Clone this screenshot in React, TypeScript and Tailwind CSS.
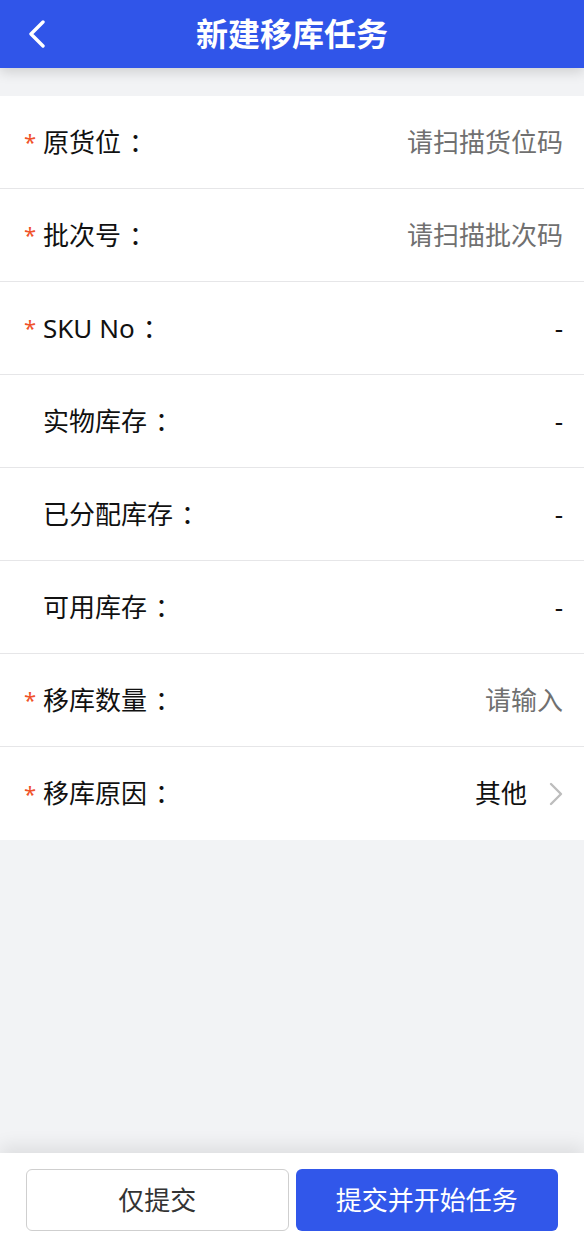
type Row = {
  label: string;
  required: boolean;
  value: string;
  placeholder?: boolean;
  arrow?: boolean;
};

const rows: Row[] = [
  { label: '原货位', required: true, value: '请扫描货位码', placeholder: true },
  { label: '批次号', required: true, value: '请扫描批次码', placeholder: true },
  { label: 'SKU No', required: true, value: '-' },
  { label: '实物库存', required: false, value: '-' },
  { label: '已分配库存', required: false, value: '-' },
  { label: '可用库存', required: false, value: '-' },
  { label: '移库数量', required: true, value: '请输入', placeholder: true },
  { label: '移库原因', required: true, value: '其他', arrow: true },
];

export default function App() {
  return (
    <div
      className="flex h-[1238px] w-[584px] flex-col overflow-hidden bg-[#f2f3f5]"
      style={{ fontFamily: '"Noto Sans", "Noto Sans CJK SC", sans-serif' }}
    >
      <header className="relative z-10 flex h-[68px] shrink-0 items-center justify-center bg-[#3055e9] shadow-[0_4px_12px_rgba(0,0,0,0.15)]">
        <svg className="absolute left-[27px] top-[20px]" width="20" height="28" viewBox="0 0 20 28" fill="none">
          <polyline points="16,2 4,14 16,26" stroke="white" strokeWidth="3.4" strokeLinecap="round" strokeLinejoin="round" />
        </svg>
        <h1 className="text-[32px] font-bold text-white">新建移库任务</h1>
      </header>

      <div className="mt-[28px] bg-white">
        {rows.map((row, i) => (
          <div
            key={row.label}
            className={`flex h-[93px] items-center pr-[21px] ${i < rows.length - 1 ? 'border-b border-[#e6e6e8]' : ''}`}
          >
            <span className="w-[43px] self-center pb-[2px] pl-[24px] text-[22px] leading-none text-[#f0522a]">
              {row.required ? '*' : ''}
            </span>
            <span className="text-[26px] text-[#111]">
              {row.label}
              <span className="ml-[8px]">：</span>
            </span>
            <span className="flex-1" />
            <span className={`text-[26px] ${row.placeholder ? 'text-[#707070]' : 'text-[#111]'}`}>
              {row.value}
            </span>
            {row.arrow && (
              <svg className="ml-[22px]" width="14" height="24" viewBox="0 0 14 24" fill="none">
                <polyline points="2,2 12,12 2,22" stroke="#bdbdbd" strokeWidth="2.4" strokeLinecap="round" strokeLinejoin="round" />
              </svg>
            )}
          </div>
        ))}
      </div>

      <div className="flex-1" />

      <footer className="flex h-[85px] shrink-0 gap-[7px] bg-white px-[26px] pt-[16px] shadow-[0_-8px_16px_rgba(0,0,0,0.08)]">
        <button className="flex h-[62px] w-[264px] items-center justify-center rounded-[6px] border border-[#cfcfcf] bg-white text-[26px] text-[#333]">
          仅提交
        </button>
        <button className="flex h-[62px] w-[264px] items-center justify-center rounded-[6px] bg-[#3157ea] text-[26px] text-white">
          提交并开始任务
        </button>
      </footer>
    </div>
  );
}
